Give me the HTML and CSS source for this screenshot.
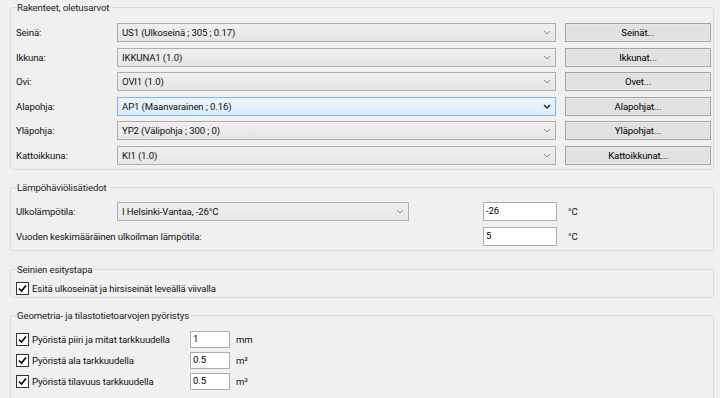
FILE: index.html
```html
<!DOCTYPE html>
<html lang="fi">
<head>
    <meta charset="UTF-8">
    <meta name="viewport" content="width=device-width, initial-scale=1.0">
    <title>Oletusarvot</title>
    <link rel="stylesheet" href="styles.css">
</head>
<body>
    <fieldset class="group group-structures">
        <legend>Rakenteet, oletusarvot</legend>
        <div class="rows">
            <div class="row">
                <span class="label">Seinä:</span>
                <div class="combo"><span>US1 (Ulkoseinä ; 305 ; 0.17)</span><svg class="chev" viewBox="0 0 8 5"><path d="M1 1 L4 4 L7 1"/></svg></div>
                <button class="btn">Seinät...</button>
            </div>
            <div class="row">
                <span class="label">Ikkuna:</span>
                <div class="combo"><span>IKKUNA1 (1.0)</span><svg class="chev" viewBox="0 0 8 5"><path d="M1 1 L4 4 L7 1"/></svg></div>
                <button class="btn">Ikkunat...</button>
            </div>
            <div class="row">
                <span class="label">Ovi:</span>
                <div class="combo"><span>OVI1 (1.0)</span><svg class="chev" viewBox="0 0 8 5"><path d="M1 1 L4 4 L7 1"/></svg></div>
                <button class="btn">Ovet...</button>
            </div>
            <div class="row">
                <span class="label">Alapohja:</span>
                <div class="combo hot"><span>AP1 (Maanvarainen ; 0.16)</span><svg class="chev" viewBox="0 0 8 5"><path d="M1 1 L4 4 L7 1"/></svg></div>
                <button class="btn">Alapohjat...</button>
            </div>
            <div class="row">
                <span class="label">Yläpohja:</span>
                <div class="combo"><span>YP2 (Välipohja ; 300 ; 0)</span><svg class="chev" viewBox="0 0 8 5"><path d="M1 1 L4 4 L7 1"/></svg></div>
                <button class="btn">Yläpohjat...</button>
            </div>
            <div class="row">
                <span class="label">Kattoikkuna:</span>
                <div class="combo"><span>KI1 (1.0)</span><svg class="chev" viewBox="0 0 8 5"><path d="M1 1 L4 4 L7 1"/></svg></div>
                <button class="btn">Kattoikkunat...</button>
            </div>
        </div>
    </fieldset>

    <fieldset class="group group-heat">
        <legend>Lämpöhäviölisätiedot</legend>
        <div class="rows">
            <div class="row">
                <span class="label">Ulkolämpötila:</span>
                <div class="combo combo-short"><span>I Helsinki-Vantaa, -26°C</span><svg class="chev" viewBox="0 0 8 5"><path d="M1 1 L4 4 L7 1"/></svg></div>
                <input class="field field-temp" type="text" value="-26">
                <span class="unit">°C</span>
            </div>
            <div class="row">
                <span class="label label-wide">Vuoden keskimääräinen ulkoilman lämpötila:</span>
                <input class="field" type="text" value="5">
                <span class="unit">°C</span>
            </div>
        </div>
    </fieldset>

    <fieldset class="group group-walls">
        <legend>Seinien esitystapa</legend>
        <label class="check">
            <span class="box"><svg viewBox="0 0 11 11"><path d="M2 5.5 L4.5 8 L9 2.5"/></svg></span>
            Esitä ulkoseinät ja hirsiseinät leveällä viivalla
        </label>
    </fieldset>

    <fieldset class="group group-round">
        <legend>Geometria- ja tilastotietoarvojen pyöristys</legend>
        <div class="rows">
            <div class="row">
                <label class="check check-fixed">
                    <span class="box"><svg viewBox="0 0 11 11"><path d="M2 5.5 L4.5 8 L9 2.5"/></svg></span>
                    Pyöristä piiri ja mitat tarkkuudella
                </label>
                <input class="field field-small" type="text" value="1">
                <span class="unit unit-small">mm</span>
            </div>
            <div class="row">
                <label class="check check-fixed">
                    <span class="box"><svg viewBox="0 0 11 11"><path d="M2 5.5 L4.5 8 L9 2.5"/></svg></span>
                    Pyöristä ala tarkkuudella
                </label>
                <input class="field field-small" type="text" value="0.5">
                <span class="unit unit-small">m²</span>
            </div>
            <div class="row">
                <label class="check check-fixed">
                    <span class="box"><svg viewBox="0 0 11 11"><path d="M2 5.5 L4.5 8 L9 2.5"/></svg></span>
                    Pyöristä tilavuus tarkkuudella
                </label>
                <input class="field field-small" type="text" value="0.5">
                <span class="unit unit-small">m³</span>
            </div>
        </div>
    </fieldset>
</body>
</html>
```

FILE: styles.css
```css
body {
    margin: 0;
    background: #f0f0f0;
    font-family: 'Roboto', 'Liberation Sans', sans-serif;
    font-size: 9.6px;
    letter-spacing: -0.12px;
    color: #111;
    overflow: hidden;
}

/* Group boxes */
.group {
    margin: 0 6px 0 10px;
    padding: 0 2px 4px 5px;
    border: 1px solid #dcdcdc;
    border-radius: 3px;
}

.group + .group {
    margin-top: 10.5px;
}

legend {
    margin-left: 1px;
    padding: 0 2px 0 0;
    line-height: 15px;
    height: 15px;
    color: #222;
}

.rows {
    display: flex;
    flex-direction: column;
}

.row {
    display: flex;
    align-items: center;
    white-space: nowrap;
}

.label {
    width: 101px;
    flex-shrink: 0;
}

.label-wide {
    width: 467px;
}

/* Structures */
.group-structures .rows {
    padding-top: 8px;
    gap: 5.6px;
}

.group-structures .row {
    height: 19px;
}

.combo {
    box-sizing: border-box;
    width: 439px;
    height: 19px;
    border: 1px solid #adadad;
    background: linear-gradient(#f0f0f0, #e5e5e5);
    display: flex;
    align-items: center;
    justify-content: space-between;
    padding: 0 3px 0 4px;
    flex-shrink: 0;
}

.combo.hot {
    border-color: #7eb4ea;
    background: linear-gradient(#ecf4fc, #dcecfc);
}

.combo-short {
    width: 292px;
}

.chev {
    width: 8px;
    height: 5px;
    margin-right: 1px;
}

.chev path {
    fill: none;
    stroke: #8a8a8a;
    stroke-width: 1;
}

.combo.hot .chev path {
    stroke: #222;
    stroke-width: 1.4;
}

.btn {
    box-sizing: border-box;
    width: 146px;
    height: 19px;
    margin-left: 9px;
    padding: 0;
    border: 1px solid #a3a3a3;
    box-shadow: inset 0 0 0 1px #e8e8e8;
    background: #e1e1e1;
    font: inherit;
    letter-spacing: inherit;
    color: #000;
}

/* Heat loss */
.group-heat .rows {
    padding-top: 7px;
    gap: 6px;
}

.group-heat .row {
    height: 19px;
}

.field {
    box-sizing: border-box;
    width: 74px;
    height: 19px;
    border: 1px solid #abadb3;
    background: #fff;
    font: inherit;
    letter-spacing: inherit;
    color: #000;
    padding: 0 2px 3px;
    outline: none;
    flex-shrink: 0;
}

.field-temp {
    margin-left: 74px;
}

.unit {
    margin-left: 11px;
}

/* Checkboxes */
.check {
    display: flex;
    align-items: center;
    gap: 3px;
    white-space: nowrap;
}

.box {
    box-sizing: border-box;
    width: 13px;
    height: 13px;
    border: 1px solid #333;
    background: #fff;
    display: flex;
    align-items: center;
    justify-content: center;
    flex-shrink: 0;
}

.box svg {
    width: 11px;
    height: 11px;
}

.box path {
    fill: none;
    stroke: #000;
    stroke-width: 1.6;
}

.group-walls {
    padding-bottom: 1px;
}

.group-walls .check {
    height: 14px;
    margin-top: 5px;
}

/* Rounding */
.group-round {
    padding-bottom: 9px;
}

.group-round .rows {
    padding-top: 7.5px;
    gap: 4px;
}

.group-round .row {
    height: 17px;
}

.check-fixed {
    width: 174px;
}

.field-small {
    width: 40px;
    height: 17px;
    padding-bottom: 2px;
}

.unit-small {
    margin-left: 6px;
}
```
